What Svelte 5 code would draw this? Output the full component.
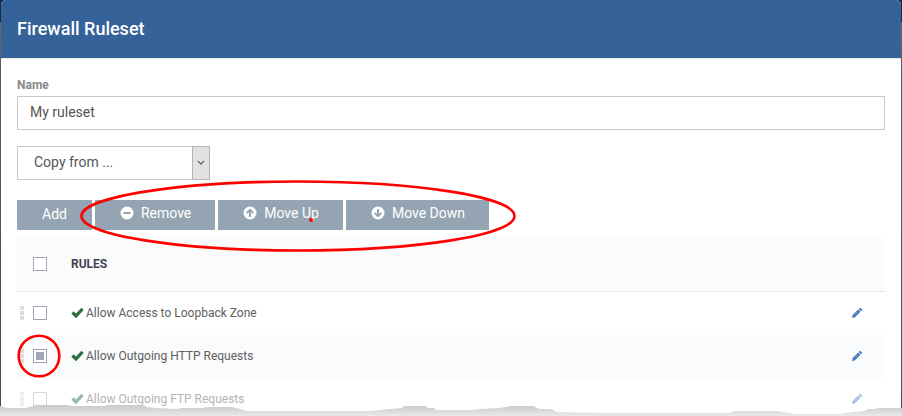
<script>
  let name = $state('My ruleset');
  let rules = $state([
    { label: 'Allow Access to Loopback Zone', selected: false },
    { label: 'Allow Outgoing HTTP Requests', selected: true },
    { label: 'Allow Outgoing FTP Requests', selected: false, faded: true }
  ]);
</script>

<div class="backdrop">
  <section class="dialog">
    <header><h1>Firewall Ruleset</h1></header>
    <div class="content">
      <label class="field-label" for="ruleset-name">Name</label>
      <input id="ruleset-name" class="name" type="text" bind:value={name} />

      <div class="select-wrap">
        <select aria-label="Copy from">
          <option>Copy from ...</option>
        </select>
        <span class="arrow">
          <svg width="8" height="6" viewBox="0 0 8 6"><path d="M1 1 4 4.2 7 1" fill="none" stroke="#606060" stroke-width="1.1" /></svg>
        </span>
      </div>

      <div class="toolbar">
        <button type="button" class="plain">Add</button>
        <button type="button">
          <svg class="glyph" viewBox="0 0 14 14"><circle cx="7" cy="7" r="6.5" fill="#fff" /><path d="M3.5 7h7" stroke="#94a4b2" stroke-width="2" /></svg>
          Remove
        </button>
        <button type="button">
          <svg class="glyph" viewBox="0 0 14 14"><circle cx="7" cy="7" r="6.5" fill="#fff" /><path d="M7 11V3.8M3.6 7.2 7 3.8l3.4 3.4" fill="none" stroke="#94a4b2" stroke-width="1.9" /></svg>
          Move Up
        </button>
        <button type="button">
          <svg class="glyph" viewBox="0 0 14 14"><circle cx="7" cy="7" r="6.5" fill="#fff" /><path d="M7 3v7.2M3.6 6.8 7 10.2l3.4-3.4" fill="none" stroke="#94a4b2" stroke-width="1.9" /></svg>
          Move Down
        </button>
      </div>

      <table>
        <thead>
          <tr>
            <th class="pick"><div><input type="checkbox" aria-label="Select all rules" /></div></th>
            <th>RULES</th>
            <th class="edit"></th>
          </tr>
        </thead>
        <tbody>
          {#each rules as rule, i}
            <tr class:faded={rule.faded}>
              <td class="pick">
                <div>
                  <span class="handle"><i></i><i></i><i></i></span>
                  <input id="rule-{i}" type="checkbox" bind:checked={rule.selected} />
                </div>
              </td>
              <td>
                <label class="rule" for="rule-{i}">
                  <svg width="13" height="12" viewBox="0 0 13 12"><path d="M.3 6.7 2.6 4.3 5 6.5 10.4.8 12.7 3 5.1 11.2Z" fill="#2f7040" /></svg>
                  {rule.label}
                </label>
              </td>
              <td class="edit">
                <button type="button" aria-label="Edit rule">
                  <svg width="12" height="12" viewBox="0 0 12 12">
                    <path d="M1 11 1.4 8.2 7.2 2.6 9.4 4.8 3.7 10.5ZM7.8 2 8.6 1.2q.6-.5 1.2 0l1 1q.5.6 0 1.2l-.8.8Z" fill="#3a74bd" />
                    <path d="M3.2 8.2 7.2 4.3" stroke="#9dbde3" stroke-width=".7" /><path d="m1.7 9.3 1 1" stroke="#fff" stroke-width=".7" />
                  </svg>
                </button>
              </td>
            </tr>
          {/each}
        </tbody>
      </table>
    </div>
  </section>

  <svg class="ring wide" width="438" height="74" viewBox="0 0 438 74"><ellipse cx="219" cy="37" rx="216.5" ry="34.5" /></svg>
  <svg class="ring small" width="44" height="44" viewBox="0 0 44 44"><circle cx="22" cy="22" r="20.3" /></svg>
  <span class="dot"></span>
  <svg class="tear" viewBox="0 0 902 12" preserveAspectRatio="none">
    <defs>
      <linearGradient id="tear-shade" x1="0" y1="0" x2="0" y2="1">
        <stop offset="0" stop-color="#c9c9c9" />
        <stop offset="1" stop-color="#e9e9e9" />
      </linearGradient>
    </defs>
    <path fill="url(#tear-shade)" d="M0 2 7 4H27L28 3 36 2 40 1H67L72 2H105L108 1H143L147 3 155 4 177 5 182 4H203L206 3H232L240 5 247 7H371L380 6 390 5 402 4 404 2H425L428 4H434L436 6H473L480 5 500 4 510 2H533L537 4 540 5H552L556 8 600 9H730L735 7H777L782 8 790 9 794 10H840L845 9 855 8 864 7 868 5H875L878 4H902V12H0Z" />
  </svg>
</div>

<style>
  :global(body) {
    margin: 0;
  }
  .backdrop {
    position: relative;
    overflow: hidden;
    padding: 0 1px;
    background: linear-gradient(#172b44 22px, #6b6b6b 23px, #58595b 70px, #4c4d50 100%);
    font-family: Roboto, sans-serif;
    color: #555;
  }
  .dialog {
    background: #fff;
    border-radius: 5px 5px 0 0;
  }
  header {
    display: flex;
    align-items: center;
    height: 58px;
    padding: 0 16px;
    background: #356298;
    border-bottom: 1px solid #e5e5e5;
    border-radius: 5px 5px 0 0;
  }
  h1 {
    margin: 0;
    font-size: 18px;
    line-height: 24px;
    font-weight: 500;
    color: #fff;
  }
  .content {
    padding: 18px 16px 0;
  }
  .field-label {
    display: block;
    margin-bottom: 3px;
    font-size: 12px;
    line-height: 16px;
    font-weight: 700;
    color: #888;
  }
  .name,
  select {
    display: block;
    box-sizing: border-box;
    width: 100%;
    height: 34px;
    margin: 0;
    padding: 0 12px 2px;
    border: 1px solid #c8c8c8;
    border-radius: 0;
    background: #fff;
    font: 14px Roboto, sans-serif;
    color: #555;
  }
  .select-wrap {
    position: relative;
    width: 193px;
    margin: 16px 0 20px;
  }
  select {
    appearance: none;
    padding: 0 16px 2px;
  }
  .arrow {
    position: absolute;
    top: 0;
    right: 0;
    bottom: 0;
    box-sizing: border-box;
    width: 18px;
    display: flex;
    align-items: center;
    justify-content: center;
    border: 1px solid #b5b5b5;
    background: #e1e1e1;
    pointer-events: none;
  }
  .toolbar {
    display: flex;
    gap: 3px;
    margin-bottom: 8px;
  }
  .toolbar button {
    display: flex;
    align-items: center;
    gap: 7px;
    height: 30px;
    padding: 0 25px 4px;
    border: 0;
    background: #94a4b2;
    font: 14px Roboto, sans-serif;
    color: #fff;
  }
  .toolbar button + button {
    padding-right: 24px;
  }
  .toolbar .plain {
    padding-bottom: 2px;
  }
  .glyph {
    width: 14px;
    height: 14px;
  }
  table {
    width: 100%;
    margin-bottom: -5px;
    border-collapse: separate;
    border-spacing: 0;
    table-layout: fixed;
    font-size: 12px;
    line-height: 16px;
  }
  th,
  td {
    height: 41px;
    padding: 0 0 2px;
    text-align: left;
    vertical-align: middle;
  }
  th {
    height: 51px;
    background: #fbfbfb;
    border-bottom: 1px solid #e9e9e9;
    font-weight: 700;
    color: #3f4259;
  }
  tbody tr:nth-child(even) {
    background: #fafbfd;
  }
  .faded {
    opacity: 0.48;
  }
  .pick {
    width: 54px;
  }
  .pick div {
    display: flex;
    justify-content: flex-end;
    gap: 9px;
    padding-right: 24px;
  }
  .handle {
    display: grid;
    gap: 1px;
  }
  .handle i {
    width: 4px;
    height: 4px;
    background: #dcdcdc;
  }
  input[type='checkbox'] {
    appearance: none;
    box-sizing: border-box;
    width: 14px;
    height: 14px;
    margin: 0;
    border: 1px solid #a0a6b5;
    background: #fff;
  }
  input[type='checkbox']:checked {
    background: #a0a6b5;
    box-shadow: inset 0 0 0 2px #fff;
  }
  .rule {
    display: flex;
    align-items: center;
    gap: 2px;
    color: #606060;
  }
  .edit {
    width: 34px;
  }
  .edit button {
    display: block;
    padding: 0;
    border: 0;
    background: none;
  }
  .edit svg {
    display: block;
  }
  .ring {
    position: absolute;
    fill: none;
    stroke: #f00;
    stroke-width: 2.6;
    pointer-events: none;
  }
  .wide {
    left: 79px;
    top: 179px;
  }
  .small {
    left: 17px;
    top: 334px;
  }
  .dot {
    position: absolute;
    left: 309px;
    top: 218px;
    width: 4px;
    height: 4px;
    border-radius: 2px;
    background: #f00;
  }
  .tear {
    position: absolute;
    left: 0;
    bottom: 0;
    width: 100%;
    height: 12px;
    pointer-events: none;
  }
</style>
